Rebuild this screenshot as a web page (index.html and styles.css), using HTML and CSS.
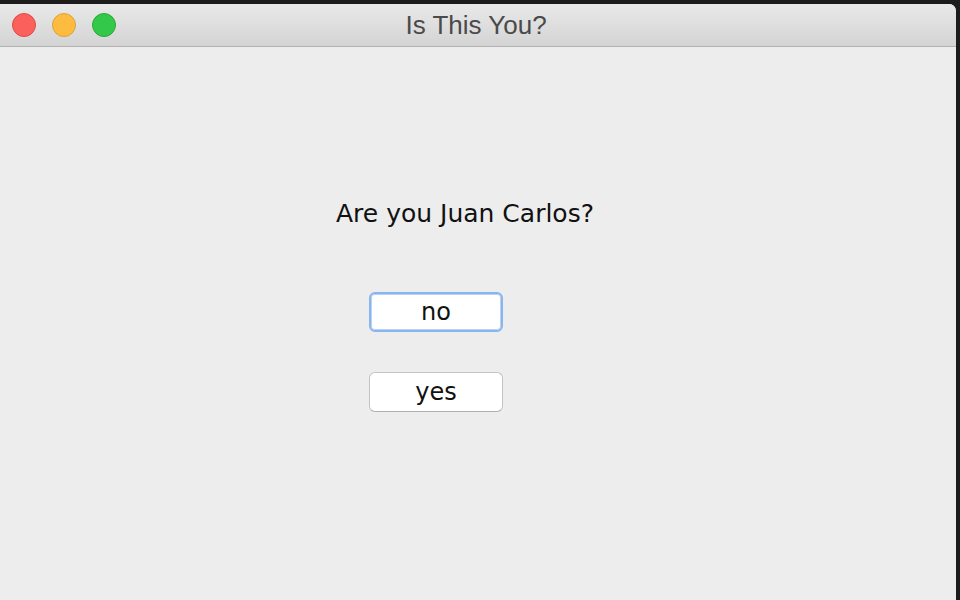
FILE: index.html
```html
<!DOCTYPE html>
<html>
<head>
<meta charset="utf-8">
<link rel="stylesheet" href="styles.css">
</head>
<body>
<div class="window">
  <div class="titlebar">
    <div class="lights">
      <span class="light red"></span>
      <span class="light yellow"></span>
      <span class="light green"></span>
    </div>
    <div class="title">Is This You?</div>
  </div>
  <div class="content">
    <div class="question">Are you Juan Carlos?</div>
    <div class="buttons">
      <button class="btn focused">no</button>
      <button class="btn">yes</button>
    </div>
  </div>
</div>
</body>
</html>
```
FILE: styles.css
```css
html, body {
  margin: 0;
  padding: 0;
  width: 960px;
  height: 600px;
  overflow: hidden;
  background: #1c1c1c;
}
body {
  padding-top: 4px;
  box-sizing: border-box;
}
.window {
  width: 956px;
  height: 596px;
  background: #ededed;
  border-top-right-radius: 7px;
  overflow: hidden;
  display: flex;
  flex-direction: column;
}
.titlebar {
  height: 42px;
  background: linear-gradient(#e9e9e9, #d4d4d4);
  border-bottom: 1px solid #b2b2b2;
  display: flex;
  align-items: center;
  position: relative;
  flex-shrink: 0;
}
.lights {
  display: flex;
  gap: 16px;
  padding-left: 12px;
}
.light {
  width: 22px;
  height: 22px;
  border-radius: 50%;
  display: block;
}
.red { background: #fc605c; border: 1px solid #de4b47; }
.yellow { background: #fdbc40; border: 1px solid #dea234; }
.green { background: #34c84a; border: 1px solid #27aa35; }
.title {
  position: absolute;
  left: 0;
  right: 4px;
  top: 0;
  bottom: 0;
  display: flex;
  align-items: center;
  justify-content: center;
  font-family: "Liberation Sans", Arial, sans-serif;
  font-size: 26px;
  color: #4a4a4a;
  pointer-events: none;
}
.content {
  padding-left: 336px;
  padding-top: 151px;
  display: flex;
  flex-direction: column;
  align-items: flex-start;
}
.question {
  font-family: "DejaVu Sans", sans-serif;
  font-size: 25px;
  color: #111;
  line-height: 32px;
}
.buttons {
  margin-top: 62px;
  margin-left: 33px;
  display: flex;
  flex-direction: column;
  gap: 40px;
}
.btn {
  width: 134px;
  height: 40px;
  background: #fff;
  border: 1px solid #c4c4c4;
  border-bottom-color: #b0b0b0;
  border-radius: 6px;
  font-family: "DejaVu Sans", sans-serif;
  font-size: 24px;
  color: #111;
  padding: 0;
  line-height: 36px;
}
.btn.focused {
  border: 2px solid #8ab4ee;
  box-shadow: inset 0 0 0 1px #b9d3f6;
}
```
